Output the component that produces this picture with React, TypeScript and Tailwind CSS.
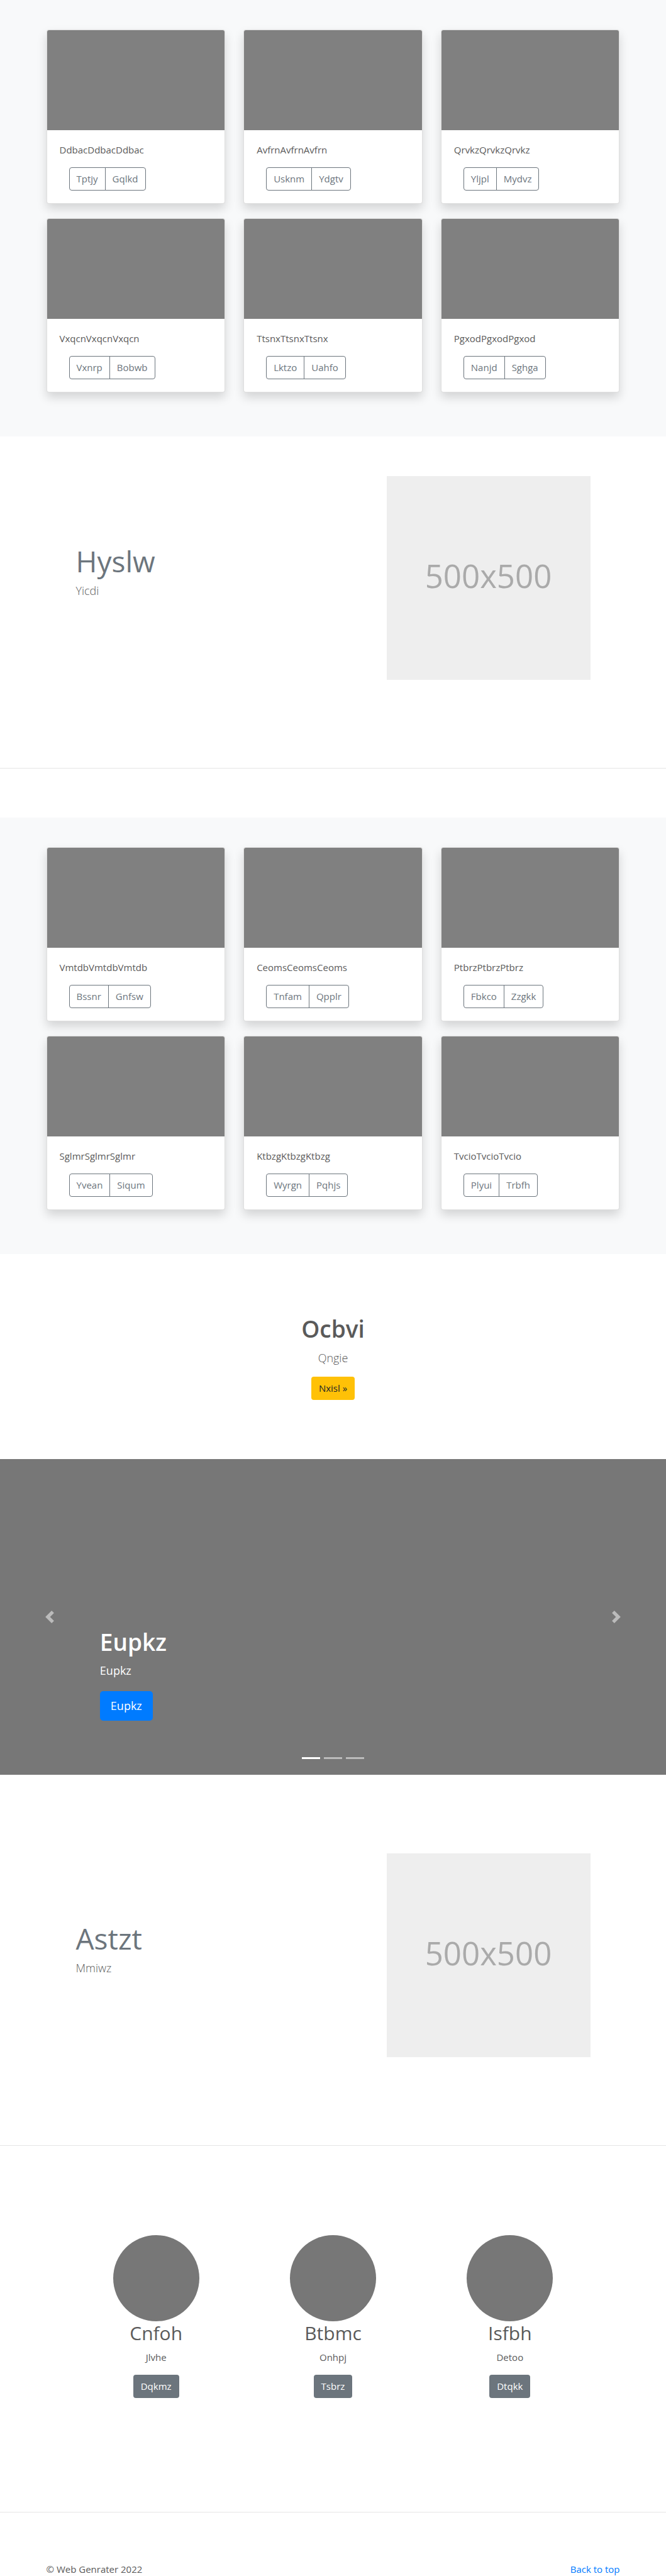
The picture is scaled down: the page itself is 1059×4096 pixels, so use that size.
type CardItem = { title: string; actions: [string, string] };

const firstAlbum: CardItem[] = [
  { title: "DdbacDdbacDdbac", actions: ["Tptjy", "Gqlkd"] },
  { title: "AvfrnAvfrnAvfrn", actions: ["Usknm", "Ydgtv"] },
  { title: "QrvkzQrvkzQrvkz", actions: ["Yljpl", "Mydvz"] },
  { title: "VxqcnVxqcnVxqcn", actions: ["Vxnrp", "Bobwb"] },
  { title: "TtsnxTtsnxTtsnx", actions: ["Lktzo", "Uahfo"] },
  { title: "PgxodPgxodPgxod", actions: ["Nanjd", "Sghga"] },
];

const secondAlbum: CardItem[] = [
  { title: "VmtdbVmtdbVmtdb", actions: ["Bssnr", "Gnfsw"] },
  { title: "CeomsCeomsCeoms", actions: ["Tnfam", "Qpplr"] },
  { title: "PtbrzPtbrzPtbrz", actions: ["Fbkco", "Zzgkk"] },
  { title: "SglmrSglmrSglmr", actions: ["Yvean", "Siqum"] },
  { title: "KtbzgKtbzgKtbzg", actions: ["Wyrgn", "Pqhjs"] },
  { title: "TvcioTvcioTvcio", actions: ["Plyui", "Trbfh"] },
];

const people = [
  { name: "Cnfoh", text: "Jlvhe", action: "Dqkmz" },
  { name: "Btbmc", text: "Onhpj", action: "Tsbrz" },
  { name: "Isfbh", text: "Detoo", action: "Dtqkk" },
];

function Card({ item }: { item: CardItem }) {
  return (
    <article className="rounded border border-black/[0.125] bg-white bg-clip-border shadow-[0_8px_16px_rgba(0,0,0,0.15)]">
      <div className="h-[159px] rounded-t-[3px] bg-[#808080]" />
      <div className="px-5 py-5">
        <p className="mb-4 leading-[23px]">{item.title}</p>
        <div className="ml-[15px] flex">
          <button className="h-[37px] rounded-l border border-[#6c757d] px-[11px] text-[#6c757d]">
            {item.actions[0]}
          </button>
          <button className="-ml-px h-[37px] rounded-r border border-[#6c757d] px-[11px] text-[#6c757d]">
            {item.actions[1]}
          </button>
        </div>
      </div>
    </article>
  );
}

function Album({ items }: { items: CardItem[] }) {
  return (
    <section className="bg-[#f8f9fa] pt-[47px] pb-[70px]">
      <div className="mx-auto grid w-full max-w-[912px] grid-cols-3 gap-x-[29px] gap-y-[23px]">
        {items.map((item) => (
          <Card key={item.title} item={item} />
        ))}
      </div>
    </section>
  );
}

function Feature({ title, text }: { title: string; text: string }) {
  return (
    <div className="mx-auto flex w-full max-w-[818px] justify-between">
      <div className="pt-[111px]">
        <h2 className="mb-2 text-[46px] leading-[48px] text-[#6c757d]">{title}</h2>
        <p className="text-[18px] leading-[30px] font-light">{text}</p>
      </div>
      <div className="flex size-[324px] items-center justify-center bg-[#eeeeee] pb-2 text-[51px] text-[#aaaaaa]">
        500x500
      </div>
    </div>
  );
}

function Carousel() {
  return (
    <section className="relative flex h-[502px] flex-col items-start justify-end bg-[#777777] pb-[86px] pl-[15%] text-white">
      <h1 className="mb-[7px] text-[37px] leading-[48px] font-semibold">Eupkz</h1>
      <p className="mb-[19px] text-[18px] leading-7">Eupkz</p>
      <a href="#" className="flex h-[47px] items-center rounded-[5px] bg-[#007bff] px-[17px] text-[18px]">
        Eupkz
      </a>
      <button
        aria-label="Previous"
        className="absolute inset-y-0 left-0 flex w-[15%] items-center justify-center opacity-50"
      >
        <svg viewBox="0 0 8 8" className="size-5" fill="#fff">
          <path d="M5.25 0l-4 4 4 4 1.5-1.5L4.25 4l2.5-2.5L5.25 0z" />
        </svg>
      </button>
      <button
        aria-label="Next"
        className="absolute inset-y-0 right-0 flex w-[15%] items-center justify-center opacity-50"
      >
        <svg viewBox="0 0 8 8" className="size-5" fill="#fff">
          <path d="M2.75 0l-1.5 1.5L3.75 4l-2.5 2.5L2.75 8l4-4-4-4z" />
        </svg>
      </button>
      <div className="absolute inset-x-0 bottom-[25px] flex justify-center gap-1.5">
        <button aria-label="Slide 1" className="h-[3px] w-[29px] bg-white" />
        <button aria-label="Slide 2" className="h-[3px] w-[29px] bg-white/50" />
        <button aria-label="Slide 3" className="h-[3px] w-[29px] bg-white/50" />
      </div>
    </section>
  );
}

export default function App() {
  return (
    <main className="bg-white font-['Open_Sans','Noto_Sans',sans-serif] text-[15px] text-[#5a5a5a]">
      <Album items={firstAlbum} />

      <section className="pt-[63px] pb-[140px]">
        <Feature title="Hyslw" text="Yicdi" />
      </section>
      <hr className="mb-[78px] border-black/10" />

      <Album items={secondAlbum} />

      <section className="flex flex-col items-center pt-[95px] pb-[94px]">
        <h1 className="mb-2 text-[37px] leading-[48px] font-semibold">Ocbvi</h1>
        <p className="mb-4 text-[18px] leading-7 font-light">Qngie</p>
        <a href="#" className="flex h-[37px] items-center rounded bg-[#ffc107] px-3 text-[#212529]">
          Nxisl »
        </a>
      </section>

      <Carousel />

      <section className="pt-[125px] pb-[140px]">
        <Feature title="Astzt" text="Mmiwz" />
      </section>
      <hr className="border-black/10" />

      <section className="mx-auto grid w-full max-w-[844px] grid-cols-3 pt-[142px] pb-[181px]">
        {people.map((person) => (
          <div key={person.name} className="flex flex-col items-center">
            <div className="size-[137px] rounded-full bg-[#777777]" />
            <h2 className="mb-2 text-[30px] leading-[38px]">{person.name}</h2>
            <p className="mb-4 leading-[23px]">{person.text}</p>
            <a href="#" className="flex h-[37px] items-center rounded bg-[#6c757d] px-3 text-white">
              {person.action}
            </a>
          </div>
        ))}
      </section>
      <hr className="border-black/10" />

      <footer className="mx-auto flex w-full max-w-[912px] justify-between pt-[79px] leading-[22px]">
        <p>© Web Genrater 2022</p>
        <a href="#" className="text-[#007bff]">
          Back to top
        </a>
      </footer>
    </main>
  );
}
